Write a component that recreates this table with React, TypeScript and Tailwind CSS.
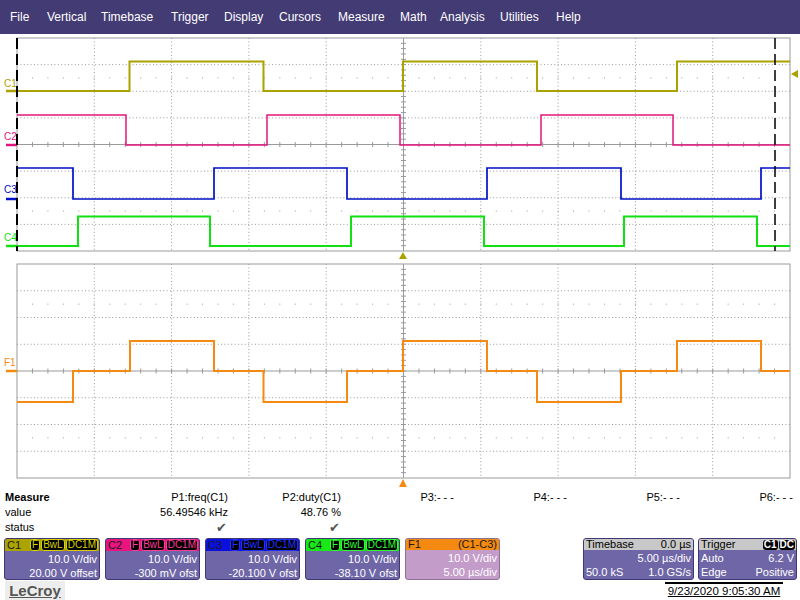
import React from 'react';

const X0 = 17;
const X1 = 790;

type Step = [number, number];

// square-ish trace: starting level, then [x, newLevel] edges
function stepPath(start: number, steps: Step[]) {
  let d = `M${X0} ${start}`;
  let y = start;
  for (const [x, ny] of steps) {
    d += ` L${x} ${y} L${x} ${ny}`;
    y = ny;
  }
  return d + ` L${X1} ${y}`;
}

const Grid = ({ y0, y1 }: { y0: number; y1: number }) => {
  const dx = (X1 - X0) / 10;
  const dy = (y1 - y0) / 8;
  const xc = X0 + 5 * dx;
  const yc = y0 + 4 * dy;
  const minor = Array.from({ length: 49 }, (_, k) => X0 + ((k + 1) * dx) / 5);
  const minorY = Array.from({ length: 39 }, (_, k) => y0 + ((k + 1) * dy) / 5);
  return (
    <g>
      {[1, 2, 3, 4, 6, 7, 8, 9].map((i) => (
        <line key={`v${i}`} x1={X0 + i * dx} y1={y0} x2={X0 + i * dx} y2={y1} stroke="#9a9a9a" strokeDasharray="1 2.4" />
      ))}
      {[1, 2, 3, 5, 6, 7].map((j) => (
        <line key={`h${j}`} x1={X0} y1={y0 + j * dy} x2={X1} y2={y0 + j * dy} stroke="#9a9a9a" strokeDasharray="1 2.4" />
      ))}
      {[1.5, 6.5].map((j) =>
        minor.map((x) => <rect key={`d${j}-${x}`} x={x - 0.5} y={y0 + j * dy - 0.5} width={1} height={1} fill="#9a9a9a" />)
      )}
      <line x1={X0} y1={yc} x2={X1} y2={yc} stroke="#9a9a9a" />
      <line x1={xc} y1={y0} x2={xc} y2={y1} stroke="#9a9a9a" />
      {minor.map((x) => (
        <line key={`t${x}`} x1={x} y1={yc - 2.5} x2={x} y2={yc + 2.5} stroke="#9a9a9a" />
      ))}
      {minorY.map((y) => (
        <line key={`ty${y}`} x1={xc - 2.5} y1={y} x2={xc + 2.5} y2={y} stroke="#9a9a9a" />
      ))}
      <rect x={X0} y={y0} width={X1 - X0} height={y1 - y0} fill="none" stroke="#9a9a9a" />
    </g>
  );
};

const traces = [
  { name: 'C1', color: '#aaa200', w: 2, label: 87, level: 91, d: stepPath(91, [[129.5, 61.5], [263.5, 91], [403, 61.5], [537, 91], [677, 61.5]]) },
  { name: 'C2', color: '#e3157e', w: 1.5, label: 140, level: 145, d: stepPath(115, [[126, 145], [267, 115], [400, 145], [541, 115], [673, 145]]) },
  { name: 'C3', color: '#0010c8', w: 1.7, label: 193, level: 199, d: stepPath(168, [[73, 199], [214, 168], [347, 199], [487, 168], [621, 199], [761, 168]]) },
  { name: 'C4', color: '#12e012', w: 2, label: 241, level: 246, d: stepPath(246, [[78, 216.5], [210, 246], [351, 216.5], [484, 246], [624, 216.5], [757, 246]]) },
  {
    name: 'F1', color: '#f58a12', w: 2, label: 366, level: 371,
    d: stepPath(402, [[73, 371], [130, 341], [214, 371], [263.5, 402], [347, 371], [403, 341], [487, 371], [537, 402], [621, 371], [677, 341], [761, 371]]),
  },
];

const menu = [
  ['File', 37], ['Vertical', 54], ['Timebase', 70], ['Trigger', 53], ['Display', 55],
  ['Cursors', 59], ['Measure', 62], ['Math', 40], ['Analysis', 60], ['Utilities', 56], ['Help', 40],
] as const;

const Tag = ({ text, className }: { text: string; className: string }) => (
  <span className={`rounded-[3px] bg-black px-[1px] text-[10px] leading-[10px] ${className}`}>{text}</span>
);

const channels = [
  { name: 'C1', head: 'bg-[#aca400]', tag: 'text-[#d8d000] border border-[#d8d000]', l1: '10.0 V/div', l2: '20.00 V offset', w: 'w-[96px]' },
  { name: 'C2', head: 'bg-[#e8157f]', tag: 'text-[#ff3a98] border border-[#ff3a98]', l1: '10.0 V/div', l2: '-300 mV ofst', w: 'w-[95px]' },
  { name: 'C3', head: 'bg-[#0a10e0]', tag: 'text-[#2030ff] border border-[#2030ff]', l1: '10.0 V/div', l2: '-20.100 V ofst', w: 'w-[95px]' },
  { name: 'C4', head: 'bg-[#18e818]', tag: 'text-[#30ff30] border border-[#30ff30]', l1: '10.0 V/div', l2: '-38.10 V ofst', w: 'w-[95px]' },
];

const measureCols = ['P1:freq(C1)', 'P2:duty(C1)', 'P3:- - -', 'P4:- - -', 'P5:- - -', 'P6:- - -'];
const measureVals = ['56.49546 kHz', '48.76 %', '', '', '', ''];
const measureStat = ['✔', '✔', '', '', '', ''];

export default function App() {
  return (
    <div className="w-[800px] h-[600px] overflow-hidden bg-white font-['Liberation_Sans',Arial,sans-serif] text-black">
      {/* menu bar */}
      <div className="h-[34px] bg-[#433b74] flex items-center pl-[10px] text-[12px] text-white">
        {menu.map(([t, w]) => (
          <div key={t} style={{ width: w }} className="shrink-0">
            {t}
          </div>
        ))}
      </div>

      {/* waveform display */}
      <svg width={800} height={456} viewBox="0 34 800 456" className="block">
        <Grid y0={38} y1={251} />
        <Grid y0={264} y1={478} />
        {traces.map((t) => (
          <g key={t.name}>
            <path d={t.d} fill="none" stroke={t.color} strokeWidth={t.w} />
            <line x1={6} y1={t.level} x2={17} y2={t.level} stroke={t.color} strokeWidth={2.5} />
            <text x={4} y={t.label} fontSize={10} fill={t.color} fontFamily="Liberation Sans, Arial, sans-serif">
              {t.name}
            </text>
          </g>
        ))}
        <line x1={17} y1={38} x2={17} y2={251} stroke="#000" strokeWidth={2} strokeDasharray="11 5" />
        <line x1={775} y1={38} x2={775} y2={251} stroke="#000" strokeWidth={1.5} strokeDasharray="11 5" />
        <polygon points="399,259 407,259 403,252" fill="#aaa200" />
        <polygon points="399,487 407,487 403,479" fill="#f58a12" />
        <polygon points="791,74 798,70 798,78" fill="#aaa200" />
      </svg>

      {/* measure table */}
      <div className="h-[45px] grid grid-cols-[115px_repeat(6,113px)] text-[11px] leading-[15px]">
        <div className="pl-[5px] font-bold">Measure</div>
        {measureCols.map((c) => (
          <div key={c} className="text-right">{c}</div>
        ))}
        <div className="pl-[5px]">value</div>
        {measureVals.map((v, i) => (
          <div key={`v${i}`} className="text-right">{v}</div>
        ))}
        <div className="pl-[5px]">status</div>
        {measureStat.map((v, i) => (
          <div key={`s${i}`} className="text-right pr-[1px] text-[#555] font-['DejaVu_Sans',sans-serif] text-[13px]">{v}</div>
        ))}
      </div>

      {/* channel descriptor boxes */}
      <div className="mt-[3px] h-[42px] flex pl-[4px] text-[11px] leading-none">
        <div className="flex gap-[5px]">
          {channels.map((c) => (
            <div key={c.name} className={`${c.w} h-[42px] rounded-[3px] border border-[#3f3875] bg-[#6e66a6] overflow-hidden flex flex-col`}>
              <div className={`h-[12px] ${c.head} flex items-center justify-between pl-[2px] pr-[1px] text-[#1a1a1a]`}>
                <span>{c.name}</span>
                <span className="flex gap-[1px]">
                  <Tag text="F" className={c.tag} />
                  <Tag text="BwL" className={c.tag} />
                  <Tag text="DC1M" className={c.tag} />
                </span>
              </div>
              <div className="h-[14px] mt-[1px] text-right pr-[2px] text-white leading-[14px]">{c.l1}</div>
              <div className="h-[14px] text-right pr-[2px] text-white leading-[14px]">{c.l2}</div>
            </div>
          ))}
          <div className="w-[95px] h-[42px] rounded-[3px] border border-[#8d6f98] bg-[#c39cca] overflow-hidden flex flex-col">
            <div className="h-[12px] bg-[#f58a10] flex items-center justify-between px-[2px] text-[#1a1a1a]">
              <span>F1</span>
              <span>(C1-C3)</span>
            </div>
            <div className="h-[14px] mt-[1px] text-right pr-[2px] text-white leading-[14px]">10.0 V/div</div>
            <div className="h-[14px] text-right pr-[2px] text-white leading-[14px]">5.00 µs/div</div>
          </div>
        </div>

        <div className="ml-[83px] w-[111px] h-[42px] rounded-[3px] border border-[#3f3875] bg-[#6e66a6] overflow-hidden flex flex-col">
          <div className="h-[12px] bg-[#c8c8c8] flex items-center justify-between px-[2px]">
            <span>Timebase</span>
            <span>0.0 µs</span>
          </div>
          <div className="h-[14px] mt-[1px] text-right pr-[2px] text-white leading-[14px]">5.00 µs/div</div>
          <div className="h-[14px] flex justify-between px-[2px] text-white leading-[14px]">
            <span>50.0 kS</span>
            <span>1.0 GS/s</span>
          </div>
        </div>

        <div className="ml-[4px] w-[99px] h-[42px] rounded-[3px] border border-[#3f3875] bg-[#6e66a6] overflow-hidden flex flex-col">
          <div className="h-[12px] bg-[#c8c8c8] flex items-center justify-between pl-[2px] pr-[1px]">
            <span>Trigger</span>
            <span className="flex gap-[1px] font-bold">
              <span className="rounded-[3px] bg-black text-white px-[1px] text-[10px] leading-[10px]">C1</span>
              <span className="rounded-[3px] bg-black text-white px-[1px] text-[10px] leading-[10px]">DC</span>
            </span>
          </div>
          <div className="h-[14px] mt-[1px] flex justify-between px-[2px] text-white leading-[14px]">
            <span>Auto</span>
            <span>6.2 V</span>
          </div>
          <div className="h-[14px] flex justify-between px-[2px] text-white leading-[14px]">
            <span>Edge</span>
            <span>Positive</span>
          </div>
        </div>
      </div>

      {/* footer */}
      <div className="h-[20px] flex items-start">
        <div className="ml-[5px] mt-[1px] w-[60px] h-[19px] bg-[#ededed] flex items-center justify-center">
          <span className="text-[15px] font-bold text-[#555] underline leading-none">LeCroy</span>
        </div>
        <div className="ml-auto mr-[17px] mt-[2px] w-[118px] border-t-2 border-black text-[11.5px] leading-[14px] text-center">
          <span className="underline">9/23/2020 9:05:30 AM</span>
        </div>
      </div>
    </div>
  );
}
